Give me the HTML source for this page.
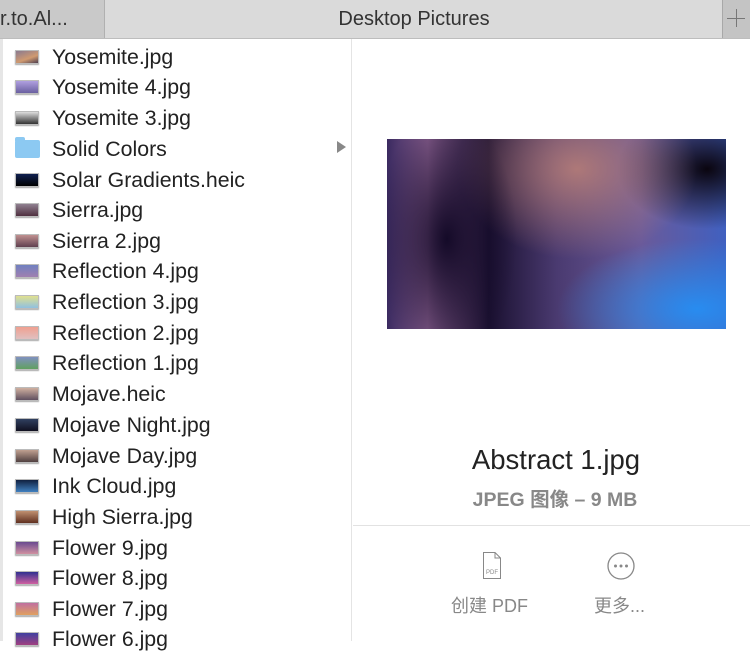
<!DOCTYPE html>
<html><head><meta charset="utf-8"><style>
*{margin:0;padding:0;box-sizing:border-box}
body{width:750px;height:641px;overflow:hidden;background:#fff;font-family:"Liberation Sans","Noto Sans CJK SC",sans-serif;position:relative}
.tabs{position:absolute;left:0;top:0;width:750px;height:39px;background:#dadada;border-bottom:1px solid #bdbdbd}
.tab1{position:absolute;left:0;top:0;width:105px;height:38px;background:#c9c9c9;border-right:1px solid #b0b0b0;font-size:20px;color:#333;line-height:38px;white-space:nowrap;overflow:hidden}
.title{position:absolute;left:106px;right:28px;top:0;height:38px;line-height:38px;text-align:center;font-size:20px;color:#333}
.plus{position:absolute;right:0;top:0;width:28px;height:38px;background:#c4c4c4;border-left:1px solid #a8a8a8}
.plus:before{content:"";position:absolute;left:13px;top:9px;width:1px;height:18px;background:#777}
.plus:after{content:"";position:absolute;left:4px;top:18px;width:18px;height:1px;background:#777}
.col{position:absolute;left:0;top:39px;width:352px;height:602px;border-right:1px solid #e4e4e4;border-left:3px solid #e6e6e6}
.row{position:absolute;left:12px;height:30px;font-size:21.3px;color:#222;line-height:32px}
.row i{position:absolute;left:0;top:9px;width:24px;height:14px;border:1px solid #bbb;box-shadow:0 1px 1px #aaa}
.row span{position:absolute;left:37px;white-space:nowrap}
.folder{position:absolute;left:0;top:7px;width:25px;height:18px;background:#8cc9f2;border-radius:2px}
.folder:before{content:"";position:absolute;left:0;top:-3px;width:10px;height:4px;background:#8cc9f2;border-radius:2px 2px 0 0}
.arrow{position:absolute;left:337px;width:0;height:0;border-left:9px solid #888;border-top:6px solid transparent;border-bottom:6px solid transparent}
.img{position:absolute;left:387px;top:139px;width:339px;height:190px;background:
radial-gradient(ellipse 70px 130px at 60px 100px,rgba(20,10,40,1),rgba(20,10,40,0)),
radial-gradient(ellipse 120px 90px at 190px 30px,rgba(190,130,120,.85),rgba(190,130,120,0)),
radial-gradient(ellipse 140px 70px at 310px 170px,rgba(40,140,240,1),rgba(40,140,240,0)),
radial-gradient(ellipse 90px 60px at 320px 30px,rgba(10,5,15,1),rgba(10,5,15,0)),
linear-gradient(90deg,#3a2a60 0%,#8a6090 12%,#1a1030 30%,#4a3a70 50%,#6a5a9a 75%,#4060c0 100%)}
.name{position:absolute;left:357px;width:398px;top:444px;text-align:center;font-size:27.5px;color:#222}
.meta{position:absolute;left:356px;width:398px;top:483px;text-align:center;font-size:19.5px;color:#888;font-weight:bold}
.hr{position:absolute;left:353px;right:0;top:525px;height:1px;background:#e2e2e2}
.lbl{position:absolute;top:592px;font-size:18px;color:#888}
</style></head><body>
<div class="tabs"><div class="tab1">r.to.Al...</div><div class="title">Desktop Pictures</div><div class="plus"></div></div>
<div class="col">
<div class="row" style="top:2px"><i style="background:linear-gradient(160deg,#8a7a90,#d09a70 60%,#504050)"></i><span>Yosemite.jpg</span></div>
<div class="row" style="top:32px"><i style="background:linear-gradient(180deg,#b0a0e0,#6a60a0)"></i><span>Yosemite 4.jpg</span></div>
<div class="row" style="top:63px"><i style="background:linear-gradient(180deg,#ddd,#333)"></i><span>Yosemite 3.jpg</span></div>
<div class="row" style="top:94px"><div class="folder"></div><span>Solid Colors</span></div>
<div class="row" style="top:125px"><i style="background:linear-gradient(180deg,#102050,#000)"></i><span>Solar Gradients.heic</span></div>
<div class="row" style="top:155px"><i style="background:linear-gradient(180deg,#908090,#503040)"></i><span>Sierra.jpg</span></div>
<div class="row" style="top:186px"><i style="background:linear-gradient(180deg,#c09090,#604050)"></i><span>Sierra 2.jpg</span></div>
<div class="row" style="top:216px"><i style="background:linear-gradient(180deg,#7080c0,#a080b0)"></i><span>Reflection 4.jpg</span></div>
<div class="row" style="top:247px"><i style="background:linear-gradient(180deg,#e0e090,#90c0e0)"></i><span>Reflection 3.jpg</span></div>
<div class="row" style="top:278px"><i style="background:linear-gradient(180deg,#f0a090,#e0c0c0)"></i><span>Reflection 2.jpg</span></div>
<div class="row" style="top:308px"><i style="background:linear-gradient(180deg,#8090c0,#60a060)"></i><span>Reflection 1.jpg</span></div>
<div class="row" style="top:339px"><i style="background:linear-gradient(180deg,#d0b0a0,#605060)"></i><span>Mojave.heic</span></div>
<div class="row" style="top:370px"><i style="background:linear-gradient(180deg,#304060,#101020)"></i><span>Mojave Night.jpg</span></div>
<div class="row" style="top:401px"><i style="background:linear-gradient(180deg,#c0a090,#504040)"></i><span>Mojave Day.jpg</span></div>
<div class="row" style="top:431px"><i style="background:linear-gradient(180deg,#102040,#4080c0)"></i><span>Ink Cloud.jpg</span></div>
<div class="row" style="top:462px"><i style="background:linear-gradient(180deg,#c09070,#603020)"></i><span>High Sierra.jpg</span></div>
<div class="row" style="top:493px"><i style="background:linear-gradient(180deg,#6a4a90,#d090a0)"></i><span>Flower 9.jpg</span></div>
<div class="row" style="top:523px"><i style="background:linear-gradient(180deg,#303090,#d060a0)"></i><span>Flower 8.jpg</span></div>
<div class="row" style="top:554px"><i style="background:linear-gradient(180deg,#c070a0,#e0a060)"></i><span>Flower 7.jpg</span></div>
<div class="row" style="top:584px"><i style="background:linear-gradient(180deg,#4040a0,#a04080)"></i><span>Flower 6.jpg</span></div>
<div class="arrow" style="top:102px;left:334px"></div>
</div>
<div class="img"></div>
<div class="name">Abstract 1.jpg</div>
<div class="meta">JPEG 图像 – 9 MB</div>
<div class="hr"></div>
<svg style="position:absolute;left:480px;top:552px" width="24" height="28" viewBox="0 0 24 28"><path d="M3.5 0.5H15L20.5 6V26.5H3.5Z M15 0.5V6H20.5" fill="none" stroke="#888"/><text x="12" y="22" font-size="6" text-anchor="middle" fill="#888" font-family="Liberation Sans">PDF</text></svg>
<div class="lbl" style="left:451px">创建 PDF</div>
<svg style="position:absolute;left:606px;top:551px" width="30" height="30" viewBox="0 0 30 30"><circle cx="15" cy="15" r="13" fill="none" stroke="#888" stroke-width="1.3"/><circle cx="9.5" cy="15" r="1.5" fill="#888"/><circle cx="15" cy="15" r="1.5" fill="#888"/><circle cx="20.5" cy="15" r="1.5" fill="#888"/></svg>
<div class="lbl" style="left:594px">更多...</div>
</body></html>
